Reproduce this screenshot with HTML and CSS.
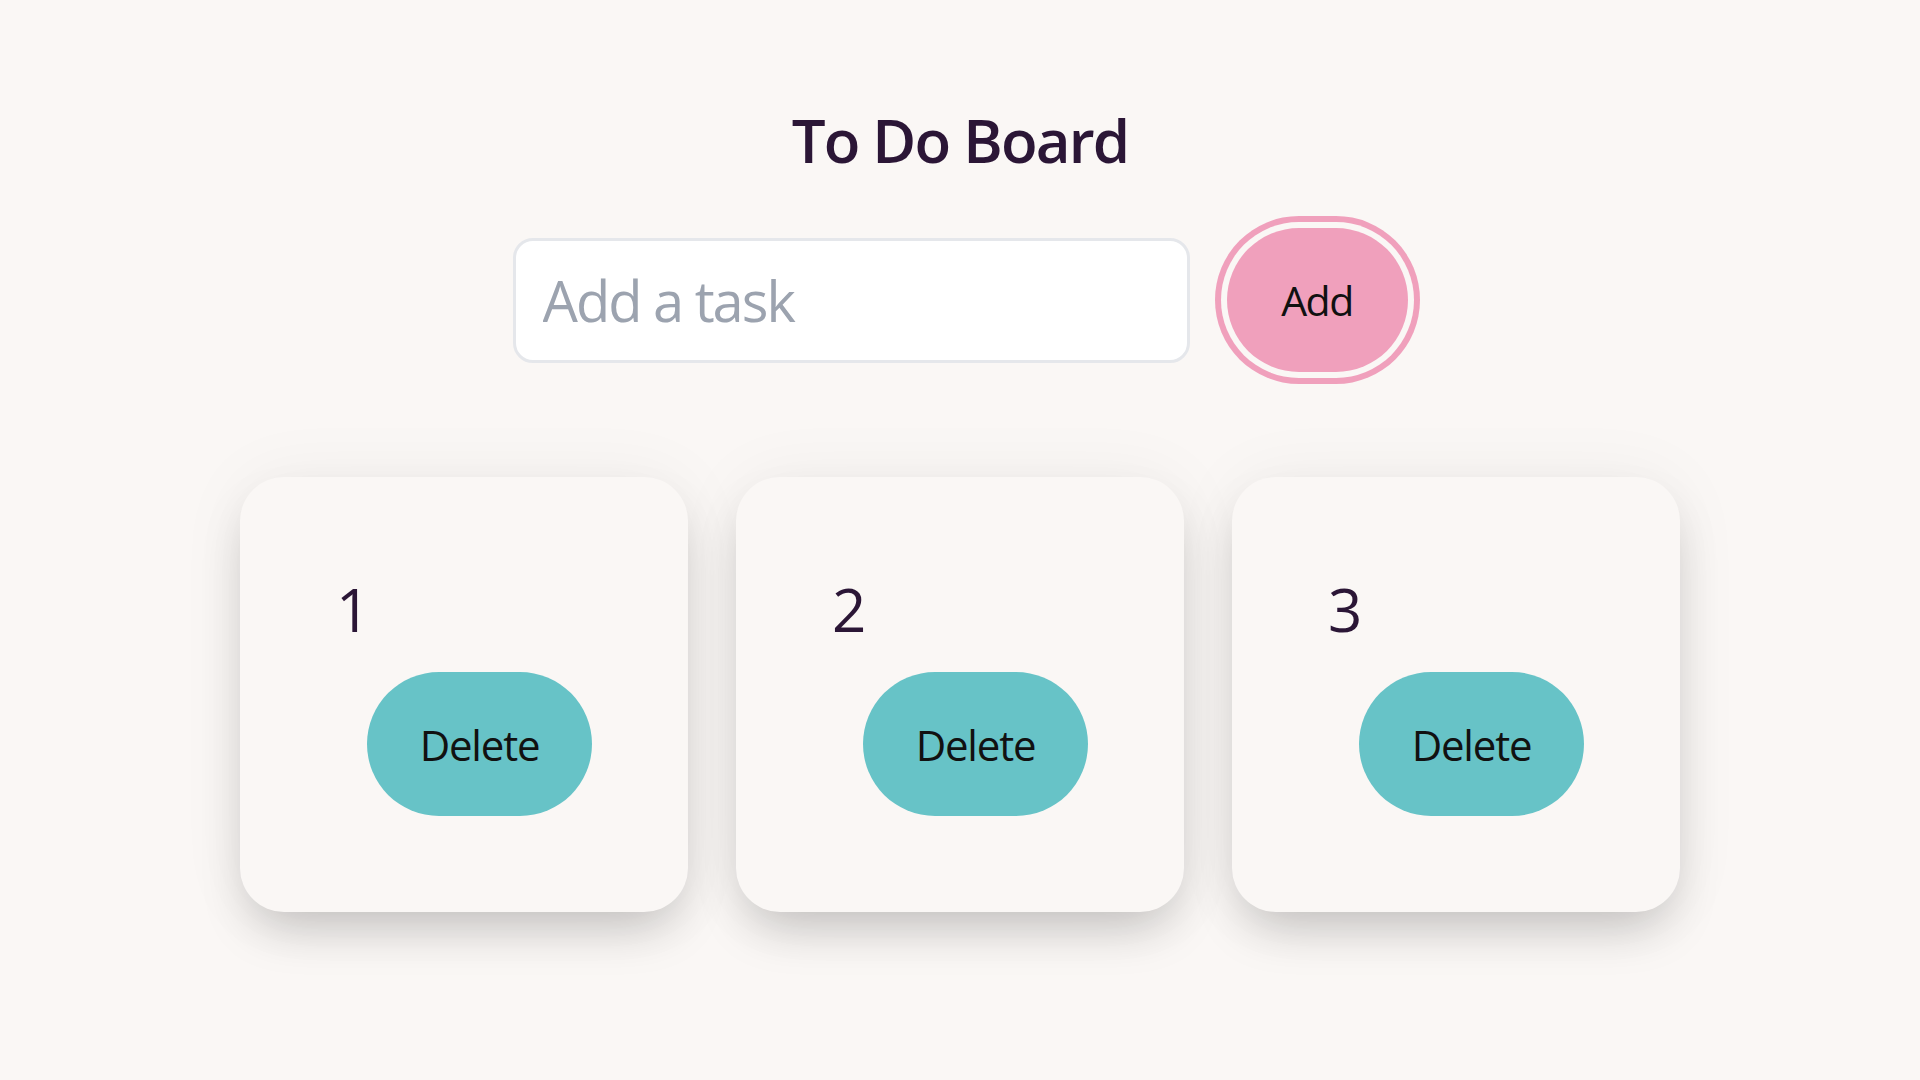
FILE: index.html
```html
<!DOCTYPE html>
<html lang="en">
<head>
<meta charset="utf-8">
<title>To Do Board</title>
<link rel="stylesheet" href="styles.css">
</head>
<body>
<main class="board">
  <h1 class="title">To Do Board</h1>
  <form class="add-row" onsubmit="return false;">
    <input class="task-input" type="text" placeholder="Add a task">
    <button class="add-btn" type="button">Add</button>
  </form>
  <section class="cards">
    <div class="card">
      <div class="card-num">1</div>
      <button class="del-btn" type="button">Delete</button>
    </div>
    <div class="card">
      <div class="card-num">2</div>
      <button class="del-btn" type="button">Delete</button>
    </div>
    <div class="card">
      <div class="card-num">3</div>
      <button class="del-btn" type="button">Delete</button>
    </div>
  </section>
</main>
</body>
</html>
```
FILE: styles.css
```css
* { box-sizing: border-box; }
html, body {
  margin: 0;
  padding: 0;
  background: #faf7f5;
}
body {
  font-family: "Open Sans", "Noto Sans", sans-serif;
  color: #2b1636;
  min-height: 1080px;
}
.board {
  padding-top: 104px;
  display: flex;
  flex-direction: column;
  align-items: center;
}
.title {
  margin: 0;
  font-size: 60px;
  line-height: 72px;
  font-weight: 600;
  letter-spacing: -1.8px;
  color: #2b1636;
}
.add-row {
  margin-top: 52px;
  display: flex;
  align-items: center;
  gap: 37px;
}
.task-input {
  width: 677px;
  height: 125px;
  border: 3px solid #e5e7eb;
  border-radius: 20px;
  background: #ffffff;
  padding: 0 27px;
  font-family: inherit;
  font-size: 56px;
  letter-spacing: -2px;
  color: #2b1636;
  outline: none;
}
.task-input::placeholder {
  color: #9ca3af;
}
.add-btn {
  width: 181px;
  height: 144px;
  border: none;
  border-radius: 9999px;
  background: #f0a0bc;
  color: #111111;
  font-family: inherit;
  font-size: 41px;
  font-weight: 500;
  letter-spacing: -1.5px;
  box-shadow: 0 0 0 6px #faf7f5, 0 0 0 12px #f0a0bc, 0 4px 6px rgba(0,0,0,0.08);
  cursor: pointer;
}
.cards {
  margin-top: 105px;
  display: grid;
  grid-template-columns: repeat(3, 448px);
  gap: 48px;
}
.card {
  height: 435px;
  padding: 96px;
  border-radius: 44px;
  background: #faf7f5;
  box-shadow: 0 25px 50px -12px rgba(0,0,0,0.22), 0 0 70px rgba(0,0,0,0.05);
  display: flex;
  flex-direction: column;
}
.card-num {
  font-size: 60px;
  line-height: 72px;
  font-weight: 500;
  color: #2b1636;
}
.del-btn {
  margin-top: 27px;
  align-self: flex-end;
  width: 225px;
  height: 144px;
  border: none;
  border-radius: 9999px;
  background: #67c3c7;
  color: #111111;
  font-family: inherit;
  font-size: 42px;
  font-weight: 500;
  letter-spacing: -1.2px;
  cursor: pointer;
}
```
